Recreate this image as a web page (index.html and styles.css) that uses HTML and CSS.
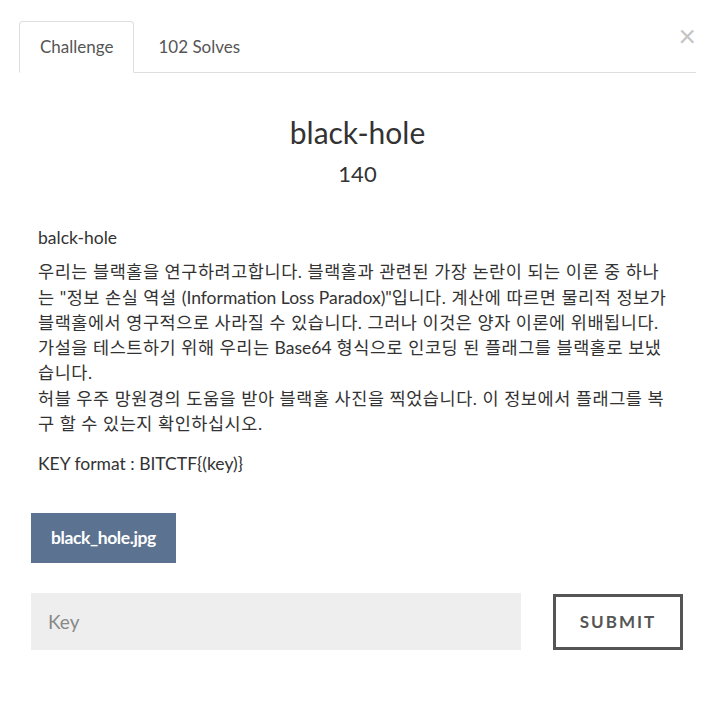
FILE: index.html
```html
<!DOCTYPE html>
<html lang="ko">
<head>
    <meta charset="UTF-8">
    <meta name="viewport" content="width=device-width, initial-scale=1.0">
    <title>black-hole</title>
    <link rel="stylesheet" href="styles.css">
</head>
<body>

    <div class="modal">
        <button class="close" aria-label="Close">&times;</button>

        <ul class="tabs">
            <li class="tab active">Challenge</li>
            <li class="tab">102 Solves</li>
        </ul>

        <div class="challenge">
            <h3 class="challenge-name">black-hole</h3>
            <h4 class="challenge-value">140</h4>

            <div class="challenge-desc">
                <p class="desc-title">balck-hole</p>
                <p class="desc-ko">우리는 블랙홀을 연구하려고합니다. 블랙홀과 관련된 가장 논란이 되는 이론 중 하나<br>는 "정보 손실 역설 <span class="latin">(Information Loss Paradox)"</span>입니다. 계산에 따르면 물리적 정보가<br>블랙홀에서 영구적으로 사라질 수 있습니다. 그러나 이것은 양자 이론에 위배됩니다.<br>가설을 테스트하기 위해 우리는 <span class="latin">Base64</span> 형식으로 인코딩 된 플래그를 블랙홀로 보냈<br>습니다.<br>
                허블 우주 망원경의 도움을 받아 블랙홀 사진을 찍었습니다. 이 정보에서 플래그를 복<br>구 할 수 있는지 확인하십시오.</p>
                <p>KEY format : BITCTF{(key)}</p>
            </div>

            <div class="files">
                <a href="#" class="file-button">black_hole.jpg</a>
            </div>

            <form class="submit-row" onsubmit="return false;">
                <input type="text" class="key-input" placeholder="Key">
                <button type="submit" class="submit-button">Submit</button>
            </form>
        </div>
    </div>

</body>
</html>
```

FILE: styles.css
```css
body {
    margin: 0;
    background-color: white;
    font-family: Lato, "Noto Sans CJK KR", sans-serif;
    color: #333;
}

.modal {
    position: relative;
    padding: 21px 22px 40px 19px;
}

.close {
    position: absolute;
    top: 20px;
    right: 22px;
    padding: 0;
    background: none;
    border: none;
    font-family: Lato, sans-serif;
    font-size: 30px;
    line-height: 30px;
    color: #c4c4c4;
    cursor: pointer;
}

.tabs {
    display: flex;
    margin: 0;
    padding: 0;
    list-style: none;
    border-bottom: 1px solid #dedede;
}

.tab {
    margin-bottom: -1px;
    margin-right: 3px;
    padding: 13px 20px;
    font-size: 17px;
    line-height: 24px;
    color: #555;
    border: 1px solid transparent;
    border-radius: 4px 4px 0 0;
}

.tab.active {
    background: white;
    border-color: #dedede #dedede white;
}

.challenge {
    padding: 0 12px;
}

.challenge-name {
    margin: 41px 0 0;
    text-align: center;
    font-size: 30px;
    font-weight: normal;
    line-height: 36px;
}

.challenge-value {
    margin: 10px 0 0;
    text-align: center;
    font-size: 22px;
    font-weight: normal;
    line-height: 28px;
}

.challenge-desc {
    margin-top: 37px;
    margin-right: -12px;
    padding-left: 7px;
    font-size: 17.5px;
    line-height: 25.3px;
}

.challenge-desc p {
    margin: 0 0 15px;
}

.challenge-desc .desc-title {
    margin-bottom: 9px;
}

.desc-ko {
    letter-spacing: 0.55px;
}

.desc-ko .latin {
    letter-spacing: 0;
}

.files {
    margin-top: 36px;
}

.file-button {
    display: inline-block;
    padding: 13px 20px;
    background-color: #5b7290;
    color: white;
    font-weight: bold;
    font-size: 17.5px;
    line-height: 24px;
    text-decoration: none;
    letter-spacing: -0.4px;
}

.submit-row {
    display: flex;
    gap: 32px;
    margin-top: 30px;
    margin-right: 1px;
}

.key-input {
    flex: 1;
    height: 57px;
    box-sizing: border-box;
    padding: 0 17px;
    border: none;
    background-color: #eeeeee;
    font-family: Lato, sans-serif;
    font-size: 19px;
    color: #333;
}

.key-input::placeholder {
    color: #888;
}

.submit-button {
    width: 130px;
    height: 56px;
    margin-top: 1px;
    background: white;
    border: 3px solid #555;
    font-family: Lato, sans-serif;
    font-size: 17px;
    font-weight: bold;
    letter-spacing: 2px;
    text-transform: uppercase;
    color: #555;
    cursor: pointer;
}
```
